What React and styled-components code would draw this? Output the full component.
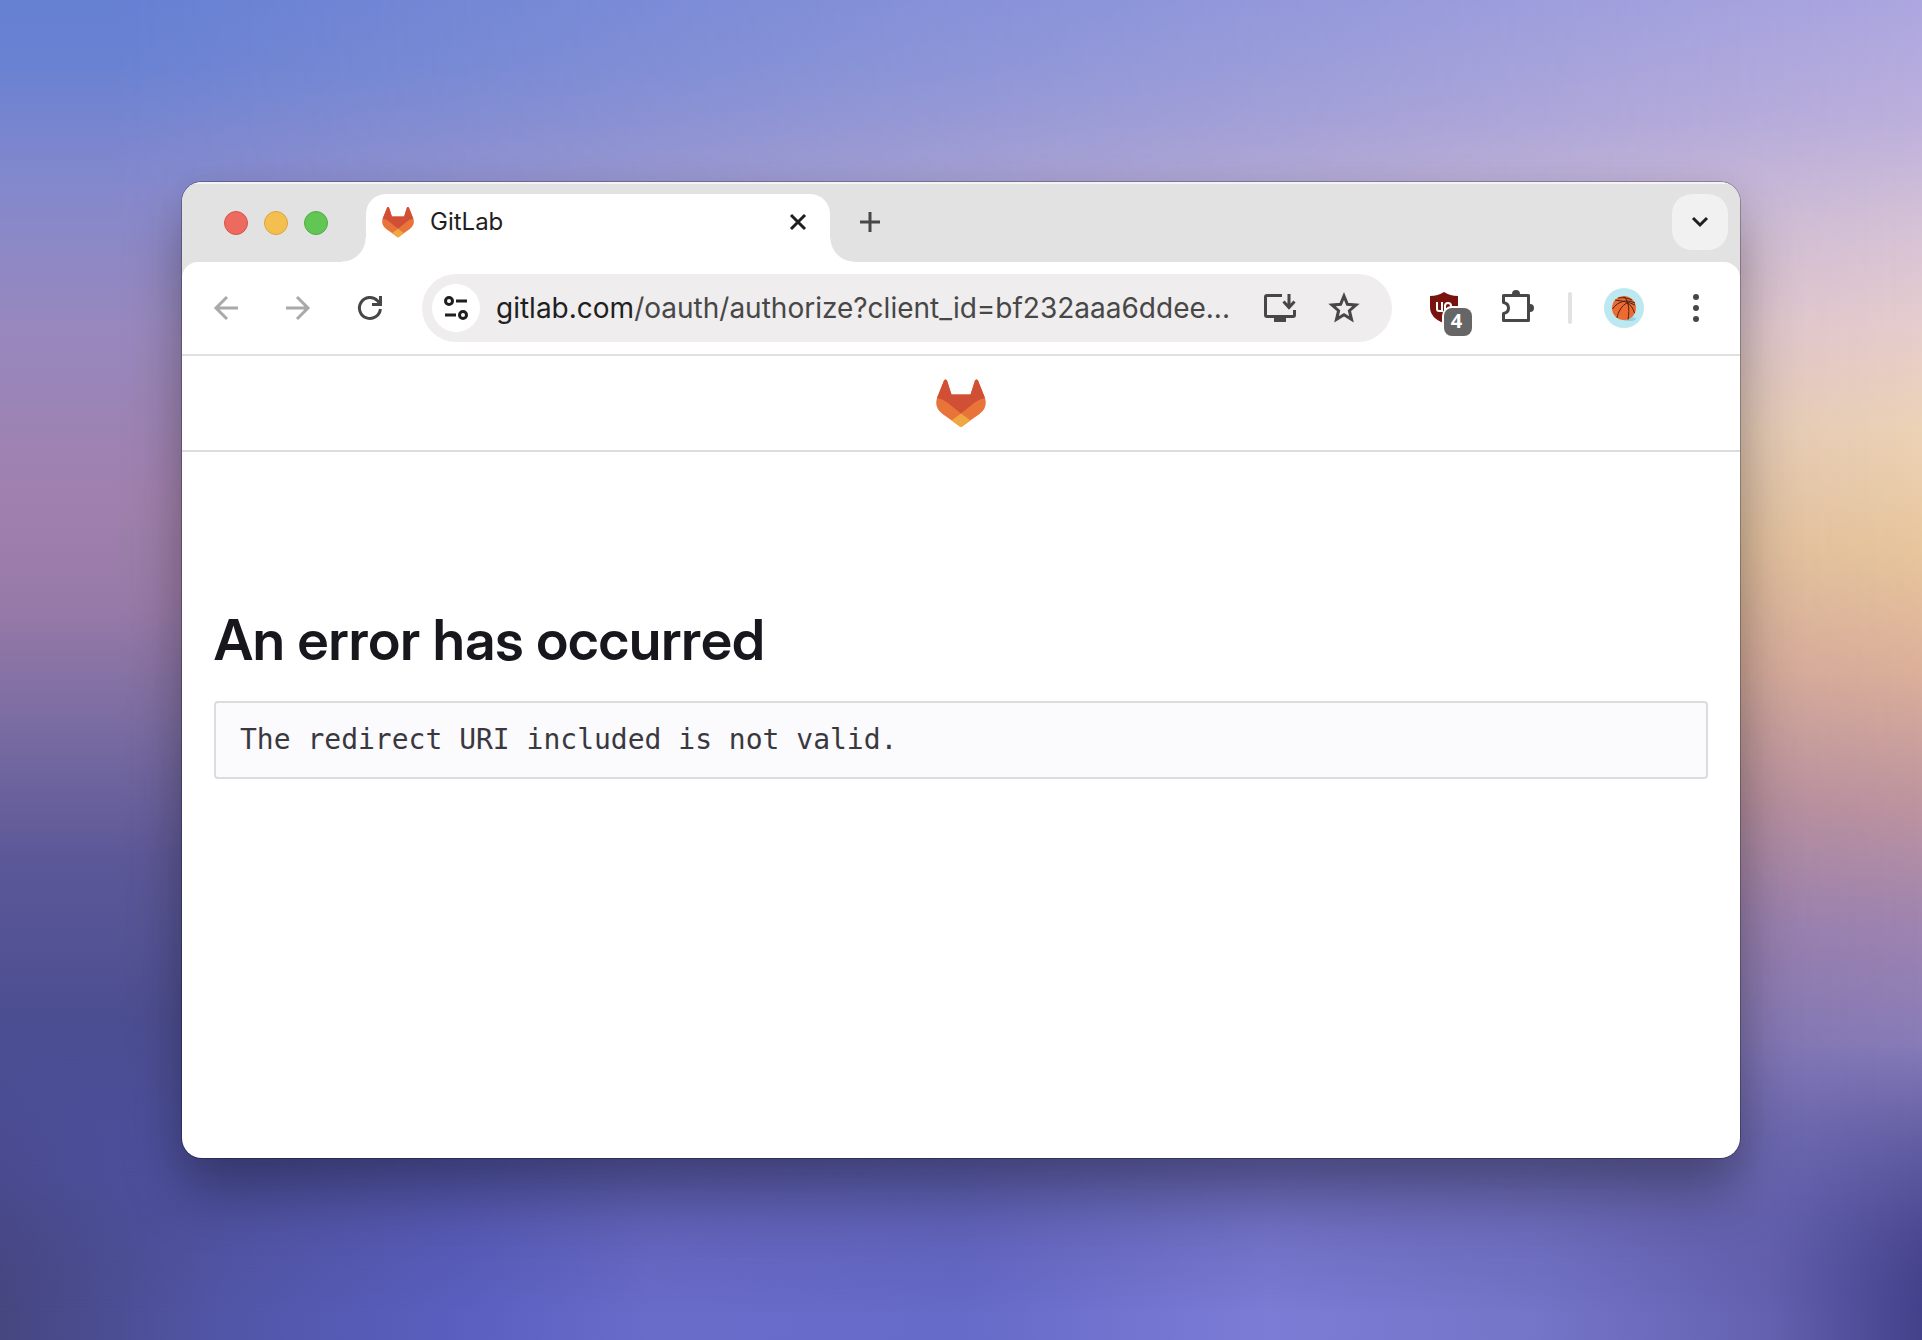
import React, { useState } from "react";
import styled, { createGlobalStyle } from "styled-components";

const GlobalStyle = createGlobalStyle`
  * {
    box-sizing: border-box;
  }

  body {
    margin: 0;
    font-family: Inter, "Liberation Sans", sans-serif;
  }
`;

const Desktop = styled.div`
  position: relative;
  isolation: isolate;
  min-height: 100vh;
  padding: 182px;
  display: flex;
  background: linear-gradient(
    180deg,
    #aca6e0 0%,
    #bdb0dc 9%,
    #d6c2d6 17%,
    #e6ccce 24%,
    #ecd2b6 32%,
    #e8c69c 41%,
    #dcb09a 50%,
    #be949f 60%,
    #9f84b0 69%,
    #857ab8 79%,
    #6c68ae 89%,
    #45428a 100%
  );

  &::before,
  &::after {
    content: "";
    position: absolute;
    inset: 0;
    z-index: -1;
  }

  &::before {
    background: linear-gradient(
      180deg,
      #6680d2 0%,
      #6a82d2 5%,
      #8488cc 14%,
      #9788be 24%,
      #a080ae 37%,
      #987aa8 45%,
      #7a6ca2 54%,
      #5c5898 64%,
      #4c4e92 76%,
      #4d4f9e 88%,
      #474782 100%
    );
    mask-image: linear-gradient(90deg, #000 0%, #000 6%, transparent 100%);
  }

  &::after {
    background: linear-gradient(
      90deg,
      #464680 0%,
      #5256a8 12%,
      #5a5fc0 24%,
      #6a6cca 34%,
      #666ac8 50%,
      #7c7cd6 66%,
      #7474c8 80%,
      #6461b0 92%,
      #43418a 100%
    );
    mask-image: linear-gradient(180deg, transparent 78%, #000 98%);
  }
`;

const Window = styled.div`
  flex: 1;
  min-width: 0;
  display: flex;
  flex-direction: column;
  overflow: hidden;
  border-radius: 20px;
  background: #fff;
  box-shadow: 0 0 0 1px rgba(0, 0, 0, 0.25), 0 36px 60px rgba(0, 0, 0, 0.32),
    0 8px 32px rgba(0, 0, 0, 0.06);
`;

const TabStrip = styled.div`
  display: flex;
  height: 80px;
  padding: 12px 12px 0 42px;
  background: #e2e2e2;
  box-shadow: inset 0 2px 0 #f4f4f4;
`;

const TrafficLights = styled.div`
  display: flex;
  align-items: center;
  gap: 16px;
  height: 58px;
  margin-right: 38px;
`;

const Light = styled.button`
  width: 24px;
  height: 24px;
  padding: 0;
  border: 1px solid ${(props) => props.$edge};
  border-radius: 50%;
  background: ${(props) => props.$color};
`;

const Tab = styled.div`
  position: relative;
  display: flex;
  align-items: center;
  width: 464px;
  height: 68px;
  padding: 0 16px 12px;
  border-radius: 20px 20px 0 0;
  background: #fff;

  &::before,
  &::after {
    content: "";
    position: absolute;
    bottom: 0;
    width: 24px;
    height: 24px;
  }

  &::before {
    right: 100%;
    background: radial-gradient(circle at 0 0, transparent 23px, #fff 24px);
  }

  &::after {
    left: 100%;
    background: radial-gradient(circle at 100% 0, transparent 23px, #fff 24px);
  }
`;

const TabTitle = styled.span`
  flex: 1;
  margin-left: 16px;
  color: #1f1f1f;
  font-size: 24px;
  line-height: 32px;
`;

const IconButton = styled.button`
  display: flex;
  align-items: center;
  justify-content: center;
  flex: none;
  width: ${(props) => props.$size || 32}px;
  height: ${(props) => props.$size || 32}px;
  padding: 0;
  border: none;
  border-radius: 20px;
  background: ${(props) => props.$background || "transparent"};
  color: ${(props) => props.$color || "#474747"};
  cursor: pointer;

  &:disabled {
    color: #a9a9a9;
    cursor: default;
  }

  svg {
    overflow: visible;
  }
`;

const NewTabSlot = styled.div`
  flex: 1;
  padding-left: 12px;
`;

const ToolbarBack = styled.div`
  background: #e2e2e2;
`;

const Toolbar = styled.div`
  display: flex;
  align-items: center;
  height: 94px;
  padding: 0 28px;
  border-bottom: 2px solid #e0e0e0;
  border-radius: 16px 16px 0 0;
  background: #fff;
`;

const NavButtons = styled.div`
  display: flex;
  gap: 40px;
  margin-right: 36px;
`;

const AddressBar = styled.div`
  display: flex;
  align-items: center;
  flex: 1;
  min-width: 0;
  height: 68px;
  padding: 0 32px 0 10px;
  border-radius: 34px;
  background: #efedee;
`;

const SiteInfo = styled(IconButton)`
  border-radius: 50%;
`;

const Url = styled.a`
  flex: 1;
  min-width: 0;
  margin: 0 16px;
  overflow: hidden;
  color: #474747;
  font-size: 28px;
  line-height: 40px;
  text-decoration: none;
  white-space: nowrap;

  strong {
    color: #1f1f1f;
    font-weight: 400;
  }
`;

const AddressActions = styled.div`
  display: flex;
  gap: 32px;
`;

const Extensions = styled.div`
  display: flex;
  align-items: center;
  margin-left: 36px;
`;

const Blocker = styled(IconButton)`
  position: relative;
  margin-right: 42px;
`;

const Badge = styled.span`
  position: absolute;
  top: 16px;
  left: 16px;
  width: 28px;
  height: 28px;
  padding-right: 3px;
  border-radius: 8px;
  background: #666;
  box-shadow: 0 0 0 2px #fff;
  color: #fff;
  font-family: "Noto Sans", sans-serif;
  font-size: 20px;
  font-weight: 700;
  line-height: 26px;
  text-align: center;
`;

const Separator = styled.span`
  width: 4px;
  height: 32px;
  margin: 0 32px 0 34px;
  border-radius: 2px;
  background: #e2e2e2;
`;

const Avatar = styled(IconButton)`
  margin-right: 36px;
`;

const PageHeader = styled.header`
  display: flex;
  align-items: center;
  justify-content: center;
  height: 96px;
  border-bottom: 2px solid #dcdcde;
`;

const Page = styled.main`
  padding: 152px 32px 32px;
`;

const Title = styled.h1`
  margin: 0 0 25px;
  color: #18171d;
  font-family: "Inter Display", Inter, "Liberation Sans", sans-serif;
  font-size: 56px;
  font-weight: 600;
  line-height: 72px;
`;

const Message = styled.pre`
  margin: 0;
  padding: 16px 24px;
  border: 2px solid #dcdcde;
  border-radius: 4px;
  background: #fbfafd;
  color: #3a383f;
  font-family: "DejaVu Sans Mono", monospace;
  font-size: 28px;
  line-height: 42px;
  white-space: pre-wrap;
`;

function Stroke({ size = 32, width = 3, children }) {
  return (
    <svg
      width={size}
      height={size}
      viewBox={`0 0 ${size} ${size}`}
      fill="none"
      stroke="currentColor"
      strokeWidth={width}
    >
      {children}
    </svg>
  );
}

function GitLabLogo({ width, height }) {
  return (
    <svg width={width} height={height} viewBox="0 0 50 48">
      <path
        fill="#e8743a"
        d="M1 19 8 1.500Q9.500-.5 11 1.500L15.500 15.500H34.500L39 1.500Q40.500-.5 42 1.500L49 19Q52 28.500 43.500 35L25 48 6.500 35Q-2 28.500 1 19Z"
      />
      <path
        fill="#d14f34"
        d="M1 19 8 1.500Q9.500-.5 11 1.500L15.500 15.500H34.500L39 1.500Q40.500-.5 42 1.500L49 19Q43 20 38 24L25 34.500 12 24Q7 20 1 19Z"
      />
      <path fill="#efa743" d="M25 34.500 34.500 41.500 25 48.500 15.500 41.500Z" />
    </svg>
  );
}

function Basketball() {
  return (
    <svg width="40" height="40" viewBox="0 0 40 40">
      <circle cx="20" cy="20" r="20" fill="#bde8ef" />
      <ellipse cx="25" cy="31" rx="7" ry="2" fill="#8fd2e4" />
      <circle cx="20" cy="20" r="12" fill="#ee6a33" />
      <g fill="none" stroke="#4a2312" strokeWidth="1">
        <path d="M8.500 21C14 13 23 11 31 15M11 12C18 13 25 14 31 17M20 8.500C24 12 26 20 24 31.500M23 15C18 17 14 24 13 30M23 15C27 17 29 20 30.500 25M14 10C19 9 24 10 28 12" />
      </g>
    </svg>
  );
}

function App() {
  const [open, setOpen] = useState(true);

  return (
    <>
      <GlobalStyle />
      <Desktop>
        <Window>
          <TabStrip>
            <TrafficLights>
              <Light aria-label="Close window" $color="#ed6a5f" $edge="#d8544a" />
              <Light aria-label="Minimize" $color="#f5bf4f" $edge="#dba53b" />
              <Light aria-label="Zoom" $color="#61c654" $edge="#4fae42" />
            </TrafficLights>
            {open && (
              <Tab>
                <GitLabLogo width={32} height={32} />
                <TabTitle>GitLab</TabTitle>
                <IconButton
                  aria-label="Close tab"
                  $color="#1f1f1f"
                  onClick={() => setOpen(false)}
                >
                  <Stroke>
                    <path d="M9 9 23 23M23 9 9 23" />
                  </Stroke>
                </IconButton>
              </Tab>
            )}
            <NewTabSlot>
              <IconButton
                aria-label="New tab"
                $size={56}
                onClick={() => setOpen(true)}
              >
                <Stroke>
                  <path d="M16 6V26M6 16H26" />
                </Stroke>
              </IconButton>
            </NewTabSlot>
            <IconButton
              aria-label="Search tabs"
              $size={56}
              $background="#f1f1f1"
              $color="#1f1f1f"
            >
              <Stroke>
                <path d="M9 12 16 19 23 12" />
              </Stroke>
            </IconButton>
          </TabStrip>

          <ToolbarBack>
            <Toolbar>
              <NavButtons>
                <IconButton aria-label="Back" disabled>
                  <Stroke>
                    <path d="M28 16H6M17 5 6 16 17 27" />
                  </Stroke>
                </IconButton>
                <IconButton aria-label="Forward" disabled>
                  <Stroke>
                    <path d="M4 16H26M15 5 26 16 15 27" />
                  </Stroke>
                </IconButton>
                <IconButton aria-label="Reload">
                  <Stroke>
                    <path d="M26.400 17A10.500 10.500 0 1 1 23.500 8.700L26 11.500M26.500 4V12.500H18" />
                  </Stroke>
                </IconButton>
              </NavButtons>

              <AddressBar>
                <SiteInfo
                  aria-label="View site information"
                  $size={48}
                  $background="#fff"
                  $color="#1f1f1f"
                >
                  <Stroke>
                    <circle cx="9" cy="9" r="3.500" />
                    <path d="M16 9H27M5 23H16" />
                    <circle cx="23" cy="23" r="3.500" />
                  </Stroke>
                </SiteInfo>
                <Url href="#">
                  <strong>gitlab.com</strong>
                  /oauth/authorize?client_id=bf232aaa6ddee...
                </Url>
                <AddressActions>
                  <IconButton aria-label="Install page">
                    <Stroke>
                      <path d="M18 3.500H3Q1.500 3.500 1.500 5V23Q1.500 24.500 3 24.500H29Q30.500 24.500 30.500 23V18M25 2V15.500M19.500 9.500 25 15.500 30.500 9.500" />
                      <path fill="currentColor" stroke="none" d="M10 25H22V30H10Z" />
                    </Stroke>
                  </IconButton>
                  <IconButton aria-label="Bookmark this page">
                    <Stroke>
                      <path d="M16 4 19.400 12.300 28 13 21.400 18.700 23.500 27.300 16 22.700 8.500 27.300 10.600 18.700 4 13 12.600 12.300Z" />
                    </Stroke>
                  </IconButton>
                </AddressActions>
              </AddressBar>

              <Extensions>
                <Blocker aria-label="Content blocker, 4 blocked">
                  <svg width="32" height="32" viewBox="0 0 32 32">
                    <path
                      fill="#7a120d"
                      d="M16 0Q22 4 30 4V15Q30 26 16 31Q2 26 2 15V4Q10 4 16 0Z"
                    />
                    <path
                      fill="none"
                      stroke="#fff"
                      strokeWidth="2"
                      d="M9 10V17Q9 19 11 19H14V10M17 19V14Q17 11 20 11T23 14T20 17H17"
                    />
                  </svg>
                  <Badge>4</Badge>
                </Blocker>
                <IconButton aria-label="Extensions">
                  <Stroke>
                    <path
                      strokeLinejoin="round"
                      d="M1.500 3.500H26.500V28.500H1.500V21.500Q6.500 20.500 6.500 16T1.500 10.500Z"
                    />
                    <path
                      fill="currentColor"
                      stroke="none"
                      d="M10 2A4 4 0 0 1 18 2ZM28 12A4 4 0 0 1 28 20Z"
                    />
                  </Stroke>
                </IconButton>
                <Separator />
                <Avatar aria-label="Profile" $size={40}>
                  <Basketball />
                </Avatar>
                <IconButton aria-label="Menu">
                  <svg width="32" height="32" fill="currentColor">
                    <circle cx="16" cy="5" r="3" />
                    <circle cx="16" cy="16" r="3" />
                    <circle cx="16" cy="27" r="3" />
                  </svg>
                </IconButton>
              </Extensions>
            </Toolbar>
          </ToolbarBack>

          <PageHeader>
            <GitLabLogo width={50} height={48} />
          </PageHeader>
          <Page>
            <Title>An error has occurred</Title>
            <Message>The redirect URI included is not valid.</Message>
          </Page>
        </Window>
      </Desktop>
    </>
  );
}

export default App;
